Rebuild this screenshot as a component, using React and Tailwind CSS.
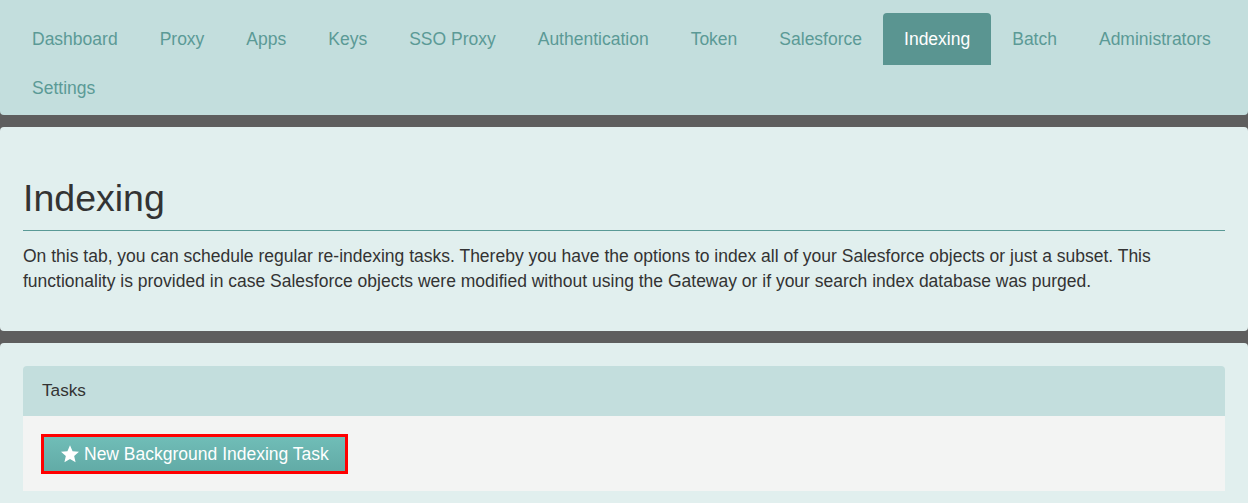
import React from 'react';

const tabs = [
  'Dashboard', 'Proxy', 'Apps', 'Keys', 'SSO Proxy', 'Authentication', 'Token',
  'Salesforce', 'Indexing', 'Batch', 'Administrators', 'Settings',
];

function StarIcon() {
  return (
    <svg viewBox="0 0 24 24" className="w-[20px] h-[20px] fill-white" aria-hidden="true">
      <polygon points="12,1.5 15.1,8.6 22.8,9.3 17,14.4 18.7,22 12,18 5.3,22 7,14.4 1.2,9.3 8.9,8.6" />
    </svg>
  );
}

export default function App() {
  return (
    <div className="min-h-[503px] bg-[#5e5e5e] text-[#333] font-['Liberation_Sans',Arial,sans-serif]">
      {/* top nav */}
      <nav className="bg-[#c3dedd] rounded-b-[4px] pl-[11px] pr-[2px] pt-[13px] pb-[4px]">
        <ul className="flex flex-wrap">
          {tabs.map(t => (
            <li key={t} className="-mb-[3px]">
              <a
                className={
                  'flex items-center h-[52px] px-[21px] text-[17.5px] rounded-t-[4px] ' +
                  (t === 'Indexing' ? 'bg-[#5a9591] text-white' : 'text-[#5b9a96]')
                }
              >
                {t}
              </a>
            </li>
          ))}
        </ul>
      </nav>

      {/* intro */}
      <section className="mt-[12px] bg-[#e1efee] rounded-[4px] px-[23px] pt-[51px] pb-[37px]">
        <h1 className="text-[37.5px] leading-[40px] text-[#333] pb-[12px] border-b border-[#5a9a96]">Indexing</h1>
        <p className="mt-[13px] text-[17.5px] leading-[25px]">
          On this tab, you can schedule regular re-indexing tasks. Thereby you have the options to index all of your Salesforce objects or just a subset. This functionality is provided in case Salesforce objects were modified without using the Gateway or if your search index database was purged.
        </p>
      </section>

      {/* tasks */}
      <section className="mt-[12px] bg-[#e1efee] rounded-t-[4px] px-[23px] pt-[23px] pb-[12px]">
        <div className="rounded-t-[4px] overflow-hidden">
          <div className="bg-[#c3dedd] h-[50px] flex items-center px-[19px] text-[17.2px] text-[#333]">Tasks</div>
          <div className="bg-[#f3f4f3] px-[18px] pt-[18px] pb-[17px]">
            <button className="flex items-center gap-[4px] h-[40px] px-[16px] border-[3px] border-[#ff0000] bg-gradient-to-b from-[#70bdb7] to-[#62aba6] text-white text-[17.5px]">
              <StarIcon />
              <span>New Background Indexing Task</span>
            </button>
          </div>
        </div>
      </section>
    </div>
  );
}
